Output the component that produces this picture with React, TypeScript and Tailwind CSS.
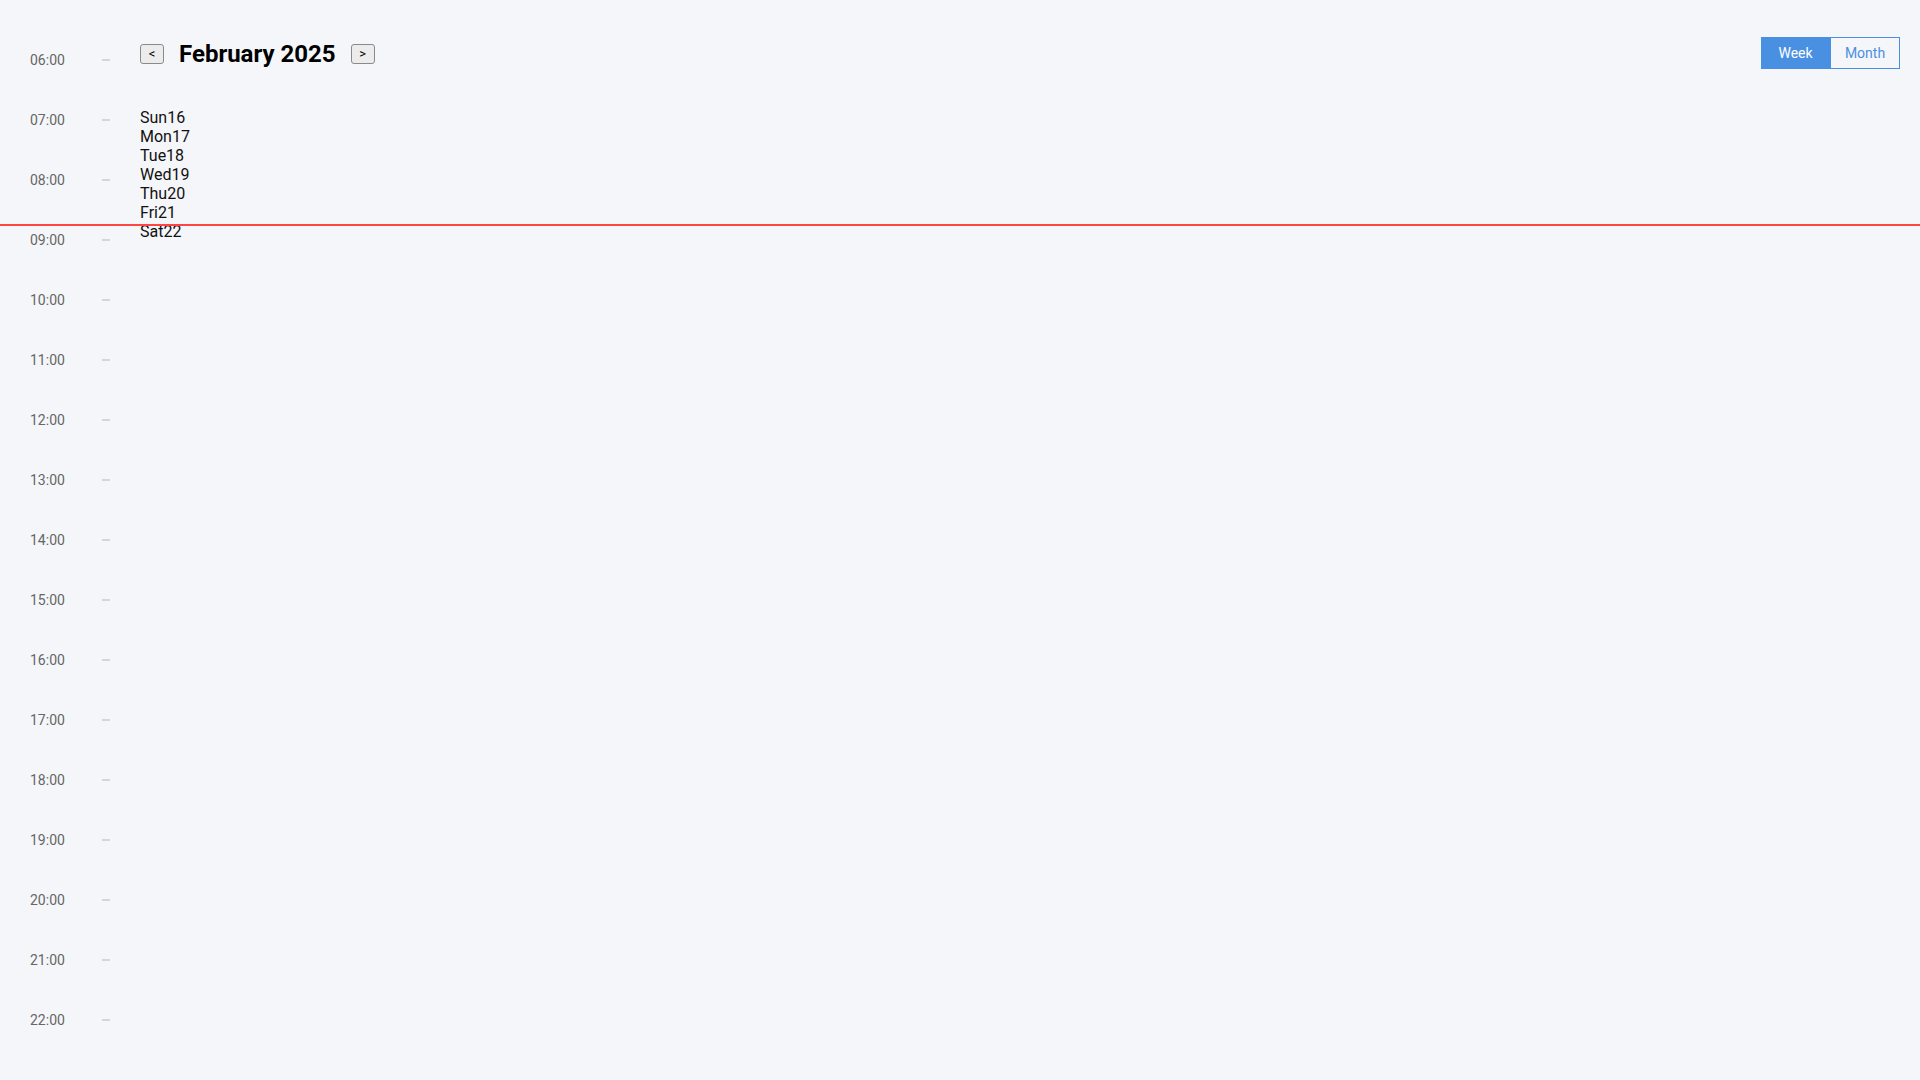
const HOURS = Array.from({ length: 17 }, (_, i) => `${String(i + 6).padStart(2, "0")}:00`);

const DAYS = [
  { name: "Sun", date: 16 },
  { name: "Mon", date: 17 },
  { name: "Tue", date: 18 },
  { name: "Wed", date: 19 },
  { name: "Thu", date: 20 },
  { name: "Fri", date: 21 },
  { name: "Sat", date: 22 },
];

export default function App() {
  return (
    <div className="relative flex min-h-[1080px] w-full bg-[#f5f6fa] font-['Roboto',sans-serif]">
      {/* time gutter */}
      <div className="flex w-[140px] shrink-0 flex-col pl-[30px] pt-[30px]">
        {HOURS.map((h) => (
          <div key={h} className="flex h-[60px] items-center">
            <span className="w-[72px] text-[14px] leading-[normal] text-[#666]">{h}</span>
            <span className="h-0.5 w-2 bg-[#d6d6d6]" />
          </div>
        ))}
      </div>

      {/* main */}
      <div className="flex flex-1 flex-col pr-5 pt-[37px]">
        <div className="flex h-8 items-center justify-between">
          <div className="flex items-center gap-[15px] pt-px">
            <button
              type="button"
              className="flex h-5 w-6 items-center justify-center rounded-[3px] border border-[#8a8a8a] bg-[#ececec] text-[13px] text-black"
            >
              &lt;
            </button>
            <h2 className="text-[24px] leading-[normal] font-bold text-black">February 2025</h2>
            <button
              type="button"
              className="flex h-5 w-6 items-center justify-center rounded-[3px] border border-[#8a8a8a] bg-[#ececec] text-[13px] text-black"
            >
              &gt;
            </button>
          </div>
          <div className="flex">
            <button
              type="button"
              className="h-8 w-[69px] border border-[#4a90e2] bg-[#4a90e2] text-[14px] text-white"
            >
              Week
            </button>
            <button
              type="button"
              className="h-8 w-[70px] border border-[#4a90e2] text-[14px] text-[#4a90e2]"
            >
              Month
            </button>
          </div>
        </div>

        <div className="mt-[39px] flex flex-col text-[16px] leading-[normal] text-[#111]">
          {DAYS.map((d) => (
            <div key={d.name}>
              <span>{d.name}</span>
              <span>{d.date}</span>
            </div>
          ))}
        </div>
      </div>

      {/* current time line */}
      <div className="absolute left-0 right-0 top-[224px] h-0.5 bg-[#ff4444]" />
    </div>
  );
}
